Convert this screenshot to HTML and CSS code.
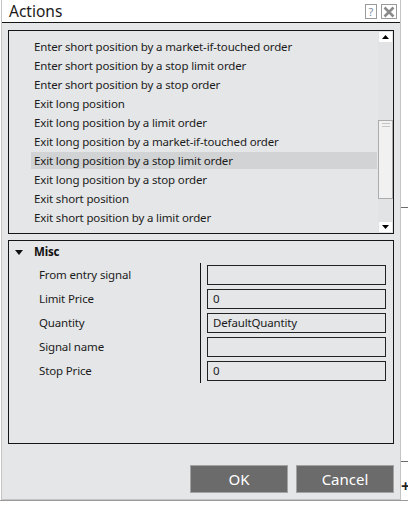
FILE: index.html
```html
<!DOCTYPE html>
<html>
<head>
<meta charset="utf-8">
<link rel="stylesheet" href="styles.css">
</head>
<body>
<div class="backdrop">
  <span class="bd-line bd-r1"></span>
  <span class="bd-line bd-r2"></span>
  <span class="bd-plus">+</span>
  <span class="bd-bottom"></span>
</div>
<div class="dialog">
  <div class="titlebar">
    <span class="title">Actions</span>
    <div class="tb-btns">
      <span class="tb-help">?</span>
      <span class="tb-close"><svg width="12" height="12" viewBox="0 0 12 12"><path d="M1.5 1.5 L10.5 10.5 M10.5 1.5 L1.5 10.5" stroke="#8a8a8a" stroke-width="2.6"/></svg></span>
    </div>
  </div>
  <div class="list">
    <div class="items">
      <div class="item">Enter short position by a market-if-touched order</div>
      <div class="item">Enter short position by a stop limit order</div>
      <div class="item">Enter short position by a stop order</div>
      <div class="item">Exit long position</div>
      <div class="item">Exit long position by a limit order</div>
      <div class="item">Exit long position by a market-if-touched order</div>
      <div class="item selected">Exit long position by a stop limit order</div>
      <div class="item">Exit long position by a stop order</div>
      <div class="item">Exit short position</div>
      <div class="item">Exit short position by a limit order</div>
      <div class="item">Exit short position by a market-if-touched order</div>
    </div>
    <div class="scrollbar">
      <div class="sb-btn"><svg width="7" height="4" viewBox="0 0 7 4"><path d="M0 4 L3.5 0 L7 4Z" fill="#000"/></svg></div>
      <div class="sb-track"><div class="thumb"><span class="grip"></span><span class="grip"></span></div></div>
      <div class="sb-btn"><svg width="7" height="4" viewBox="0 0 7 4"><path d="M0 0 L7 0 L3.5 4Z" fill="#000"/></svg></div>
    </div>
  </div>
  <div class="grid">
    <div class="cat">
      <svg class="cat-tri" width="8" height="5" viewBox="0 0 8 5"><path d="M0 0 L8 0 L4 5Z" fill="#111"/></svg>
      <span class="cat-name">Misc</span>
    </div>
    <div class="props">
      <div class="labels">
        <div class="plabel">From entry signal</div>
        <div class="plabel">Limit Price</div>
        <div class="plabel">Quantity</div>
        <div class="plabel">Signal name</div>
        <div class="plabel">Stop Price</div>
      </div>
      <div class="sep"></div>
      <div class="values">
        <div class="prow"><div class="pbox"></div></div>
        <div class="prow"><div class="pbox">0</div></div>
        <div class="prow"><div class="pbox">DefaultQuantity</div></div>
        <div class="prow"><div class="pbox"></div></div>
        <div class="prow"><div class="pbox">0</div></div>
      </div>
    </div>
  </div>
  <div class="buttons">
    <button class="btn">OK</button>
    <button class="btn">Cancel</button>
  </div>
</div>
</body>
</html>
```
FILE: styles.css
```css
* { box-sizing: border-box; }
html, body { margin: 0; padding: 0; }
body {
  width: 408px;
  height: 505px;
  overflow: hidden;
  background: #ffffff;
  font-family: "Noto Sans", "Open Sans", sans-serif;
  color: #1b1b1b;
  position: relative;
}
.backdrop { position: absolute; inset: 0; }
.bd-line { position: absolute; left: 400px; width: 8px; height: 1px; background: #6c6c6c; }
.bd-r1 { top: 207px; }
.bd-r2 { top: 461px; }
.bd-plus { position: absolute; left: 401px; top: 476px; font-size: 16px; font-weight: bold; color: #222; line-height: 20px; }
.bd-bottom { position: absolute; left: 0; top: 500px; width: 408px; height: 1px; background: #9a9a9a; }

.dialog {
  position: relative;
  margin-left: 1px;
  width: 400px;
  height: 500px;
  background: #e5e6e7;
  border: 1px solid #c4c4c4;
  border-top: 0;
  display: flex;
  flex-direction: column;
  padding: 0 6px;
}
.titlebar {
  height: 23px;
  margin: 0 -6px;
  background: #ffffff;
  border-bottom: 1px solid #151515;
  display: flex;
  align-items: flex-start;
  justify-content: space-between;
  padding-left: 7px;
}
.title { font-size: 15.5px; line-height: 22px; color: #1a1a1a; }
.tb-btns { display: flex; gap: 4px; margin-top: 4px; margin-right: 3px; }
.tb-help {
  width: 12px; height: 15px;
  border: 1px solid #9a9a9a;
  font-size: 11px; line-height: 13px; text-align: center;
  color: #7a8aa0;
}
.tb-close {
  width: 16px; height: 15px;
  border: 1px solid #9a9a9a;
  display: flex; align-items: center; justify-content: center;
}

.list {
  margin-top: 7px;
  height: 204px;
  border: 1px solid #151515;
  display: flex;
  overflow: hidden;
}
.items { flex: 1; padding-top: 7px; padding-left: 22px; padding-right: 1px; overflow: hidden; }
.item {
  height: 17px;
  margin-bottom: 2px;
  line-height: 17px;
  font-size: 11.5px;
  letter-spacing: -0.15px;
  padding-left: 3px;
  white-space: nowrap;
  color: #1b1b1b;
}
.item.selected { background: #d2d3d4; }

.scrollbar {
  width: 15px;
  background: #e2e3e4;
  display: flex;
  flex-direction: column;
  padding: 1px 0;
}
.sb-btn {
  height: 10px;
  margin: 0 1px;
  background: #ffffff;
  display: flex; align-items: center; justify-content: center;
}
.sb-track { flex: 1; }
.thumb {
  margin-top: 78px;
  height: 79px;
  background: #f1f1f1;
  border: 1px solid #acacac;
  display: flex;
  flex-direction: column;
  align-items: center;
  gap: 2px;
  padding-top: 2px;
}
.grip { width: 8px; height: 1px; background: #c6c6c6; }

.grid {
  margin-top: 6px;
  height: 204px;
  border: 1px solid #151515;
}
.cat { height: 22px; display: flex; align-items: center; }
.cat-tri { margin-left: 6px; margin-top: 0; }
.cat-name { margin-left: 11px; font-size: 11.5px; letter-spacing: -0.15px; font-weight: bold; color: #111; line-height: 22px; }

.props { display: flex; }
.labels { width: 191px; padding-left: 30px; }
.plabel { height: 24px; line-height: 24px; font-size: 11.5px; letter-spacing: -0.15px; color: #1b1b1b; white-space: nowrap; }
.sep { width: 1px; background: #151515; }
.values { margin-left: 6px; width: 179px; }
.prow { height: 24px; padding-top: 2px; }
.pbox {
  height: 20px;
  border: 1px solid #222;
  font-size: 11.5px;
  letter-spacing: -0.15px;
  line-height: 18px;
  padding-left: 5px;
  color: #1b1b1b;
}

.buttons {
  margin-top: 21px;
  display: flex;
  justify-content: flex-end;
  gap: 8px;
}
.btn {
  width: 98px;
  height: 28px;
  background: #6b6b6b;
  border: 1px solid #a3a3a3;
  color: #ffffff;
  font-family: "Noto Sans", "Open Sans", sans-serif;
  font-size: 15px;
  line-height: 24px;
  padding: 0;
}
```
